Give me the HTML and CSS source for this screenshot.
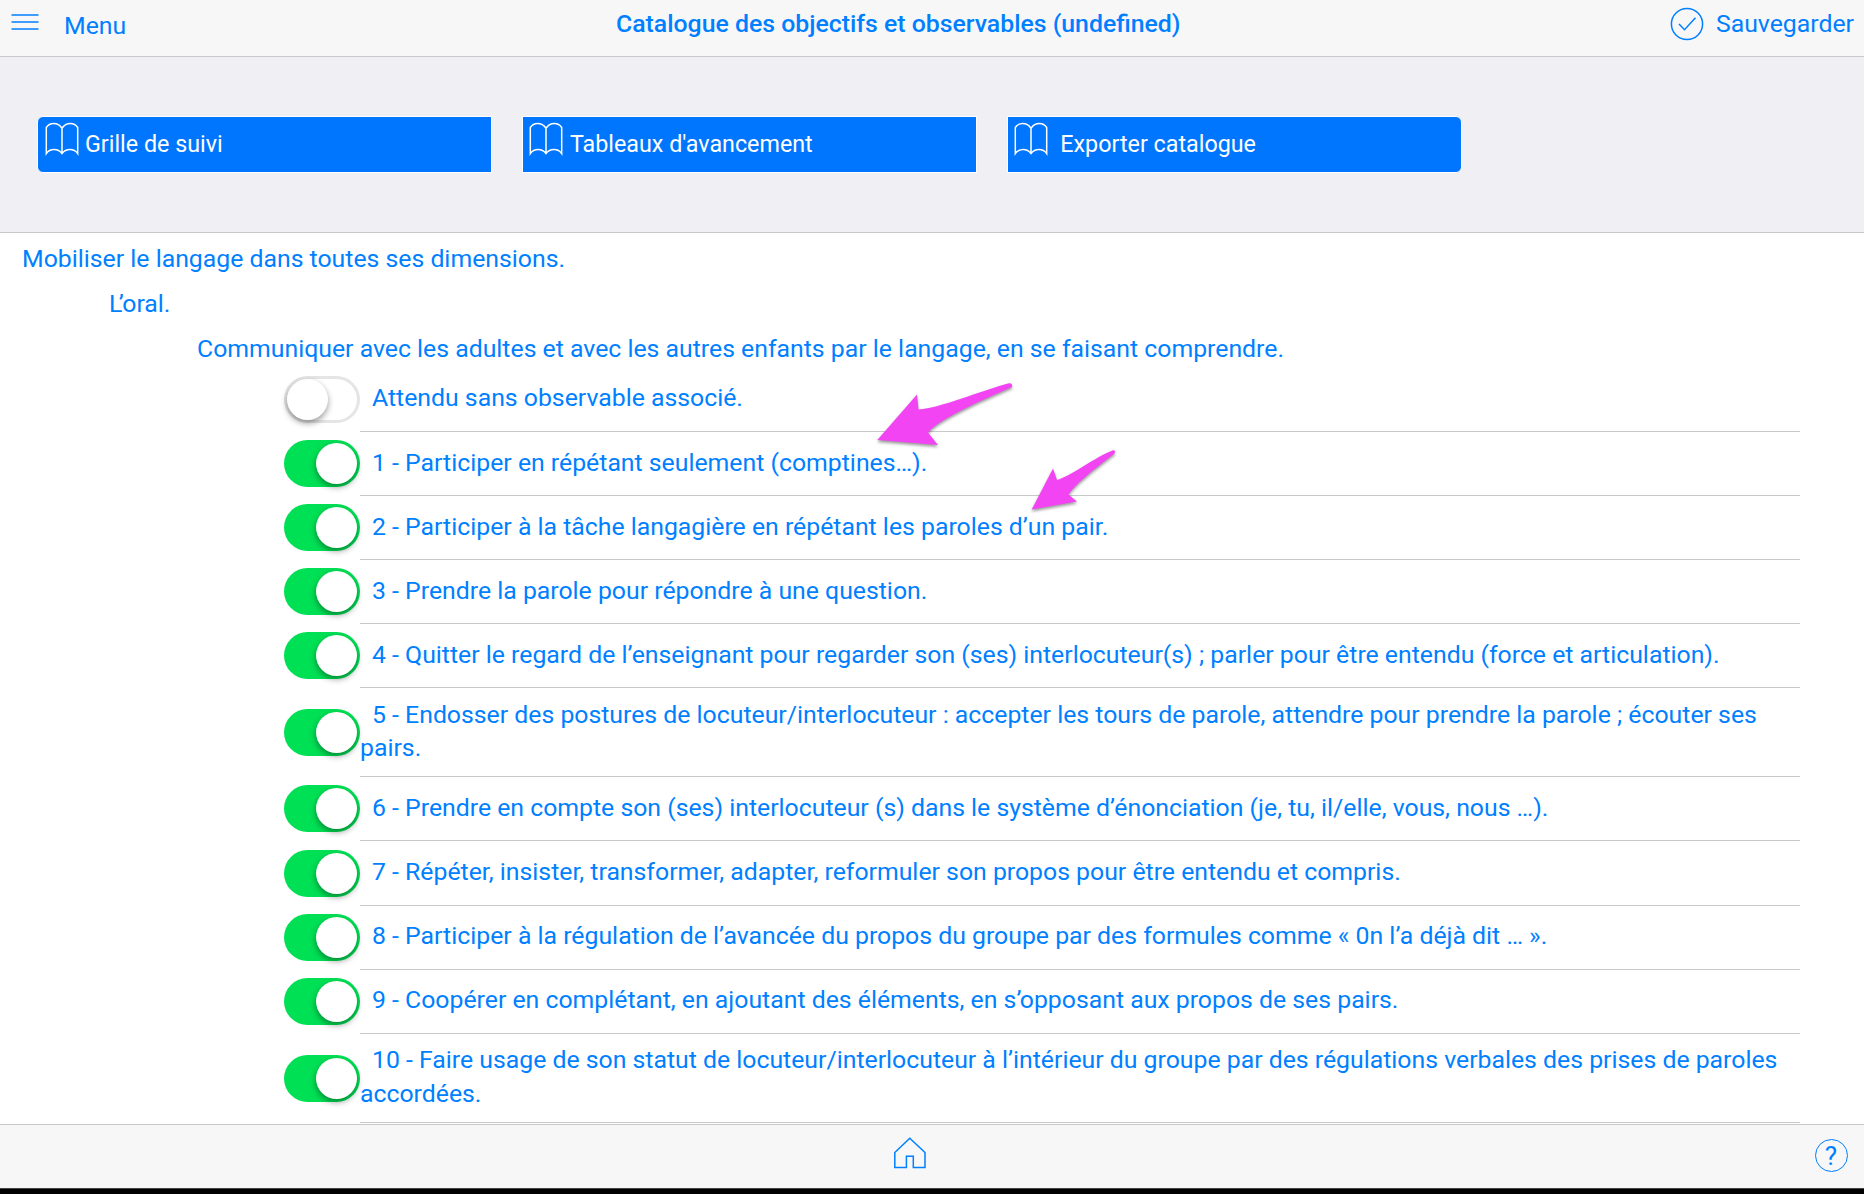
FILE: index.html
```html
<!DOCTYPE html>
<html lang="fr">
<head>
<meta charset="utf-8">
<title>Catalogue des objectifs et observables</title>
<link rel="stylesheet" href="styles.css">
</head>
<body>
<svg class="defs" width="0" height="0" aria-hidden="true">
  <symbol id="book" viewBox="0 0 34 34">
    <path d="M17 6.2C14.5 2.6 11 1.6 8.600 1.600C5.500 1.600 3 3 1.300 5.500V31.500C5 26.200 13 26.200 17 31.500C21 26.200 29 26.200 32.700 31.500V5.500C31 3 28.500 1.600 25.400 1.600C23 1.600 19.500 2.600 17 6.200V31"/>
  </symbol>
</svg>
<div class="app">
  <header class="navbar">
    <a class="nav-left">
      <svg class="menu-icon" viewBox="0 0 28 18"><path d="M.5 2H27.500M.5 9H27.500M.5 16H27.500"/></svg>
      <span class="menu-label">Menu</span>
    </a>
    <h1 class="title">Catalogue des objectifs et observables (undefined)</h1>
    <a class="nav-right">
      <svg class="check-icon" viewBox="0 0 34 34"><circle cx="17" cy="17" r="15.600"/><path d="M9 17L14.500 22.700L25.500 10.800"/></svg>
      <span>Sauvegarder</span>
    </a>
  </header>

  <section class="toolbar">
    <a class="button first"><svg class="book"><use href="#book"/></svg><span>Grille de suivi</span></a>
    <a class="button"><svg class="book"><use href="#book"/></svg><span>Tableaux d'avancement</span></a>
    <a class="button last"><svg class="book"><use href="#book"/></svg><span>Exporter catalogue</span></a>
  </section>

  <main class="content">
    <p class="heading level-1">Mobiliser le langage dans toutes ses dimensions.</p>
    <p class="heading level-2"><span class="kern">L</span>’oral.</p>
    <p class="heading level-3">Communiquer avec les adultes et avec les autres enfants par le langage, en se faisant comprendre.</p>
    <ul class="list">
      <li class="row"><span class="toggle off"></span><div class="label"><p>Attendu sans observable associé.</p></div></li>
      <li class="row"><span class="toggle"></span><div class="label"><p>1 - Participer en répétant seulement (comptines…).</p></div></li>
      <li class="row"><span class="toggle"></span><div class="label"><p>2 - Participer à la tâche langagière en répétant les paroles d’un pair.</p></div></li>
      <li class="row"><span class="toggle"></span><div class="label"><p>3 - Prendre la parole pour répondre à une question.</p></div></li>
      <li class="row"><span class="toggle"></span><div class="label"><p>4 - Quitter le regard de l’enseignant pour regarder son (ses) interlocuteur(s) ; parler pour être entendu (force et articulation).</p></div></li>
      <li class="row tall"><span class="toggle"></span><div class="label"><p>5 - Endosser des postures de locuteur/interlocuteur : accepter les tours de parole, attendre pour prendre la parole ; écouter ses<br>pairs.</p></div></li>
      <li class="row"><span class="toggle"></span><div class="label"><p>6 - Prendre en compte son (ses) interlocuteur (s) dans le système d’énonciation (je, tu, il/elle, vous, nous …).</p></div></li>
      <li class="row"><span class="toggle"></span><div class="label"><p>7 - Répéter, insister, transformer, adapter, reformuler son propos pour être entendu et compris.</p></div></li>
      <li class="row"><span class="toggle"></span><div class="label"><p>8 - Participer à la régulation de l’avancée du propos du groupe par des formules comme « 0n l’a déjà dit … ».</p></div></li>
      <li class="row"><span class="toggle"></span><div class="label"><p>9 - Coopérer en complétant, en ajoutant des éléments, en s’opposant aux propos de ses pairs.</p></div></li>
      <li class="row tall"><span class="toggle"></span><div class="label"><p>10 - Faire usage de son statut de locuteur/interlocuteur à l’intérieur du groupe par des régulations verbales des prises de paroles<br>accordées.</p></div></li>
    </ul>
  </main>

  <footer class="tabbar">
    <svg class="home-icon" viewBox="0 0 34 34"><path d="M16.800 2.200L32 16.500V31.500H20.300V20.200H13.400V31.500H1.800V16.500Z"/></svg>
    <span class="help">?</span>
  </footer>
  <div class="base"></div>
</div>
<svg class="arrows" viewBox="0 0 260 150">
  <path d="M7.300 61L47 15.500L48.500 30.500C70 29 110 12 139 4.200Q143 4 142 8C115 20 72 38 58 53.500L68 66Z"/>
  <path d="M161.700 130.500L183 89.500L187 101C203 96 225 78 243 71.200Q246 71 244.500 74.500C230 86 208 102 198.500 115.500L207 122.500Z"/>
</svg>
</body>
</html>
```
FILE: styles.css
```css
* { box-sizing: border-box; }
body {
  margin: 0;
  background: #fff;
  color: #007fff;
  font: 24.800px/33.600px Roboto, sans-serif;
}
svg { fill: none; stroke: #007fff; stroke-width: 1.5; flex: none; }
p, h1, ul { margin: 0; padding: 0; }
.defs { position: absolute; }
.app {
  display: flex;
  flex-direction: column;
  width: 1864px;
  height: 1194px;
  overflow: hidden;
}
.navbar {
  display: grid;
  grid-template-columns: 616px 1fr auto;
  align-items: start;
  height: 57px;
  flex: none;
  background: #f7f7f7;
  border-bottom: 1px solid #c8c8cb;
}
.nav-left, .nav-right { display: flex; }
.nav-left { padding: 8px 0 0 11px; }
.menu-icon { width: 28px; height: 18px; margin-top: 5px; }
.menu-label { margin: 1px 0 0 25px; }
.title { font-size: 24.820px; line-height: 33.600px; font-weight: 500; padding-top: 6.900px; white-space: nowrap; }
.nav-right { padding: 6.900px 10px 0 0; }
.check-icon { width: 34px; height: 34px; margin: .5px 12px 0 0; }

.toolbar {
  display: flex;
  gap: 29.900px;
  height: 176px;
  flex: none;
  padding: 59px 0 0 37px;
  background: #efeff4;
  border-bottom: 1px solid #c8c8cb;
}
.button {
  display: flex;
  width: 455px;
  height: 57px;
  padding: 5px 6.500px;
  gap: 6.500px;
  background: #0076ff;
  border: 1px solid #fff;
  color: #fff;
  font-size: 23.300px;
}
.button span { padding-top: 5.500px; }
.first { border-radius: 6px 0 0 6px; }
.last { border-radius: 0 6px 6px 0; gap: 12px; }
.book { width: 34px; height: 34px; stroke: #fff; }

.content { flex: 1; min-height: 0; overflow: hidden; padding-top: 3px; }
.heading { height: 45.300px; padding-top: 5.500px; white-space: nowrap; }
.level-1 { padding-left: 22px; }
.level-2 { padding-left: 109px; }
.level-3 { padding-left: 197px; padding-top: 5px; height: 41px; }
.kern { letter-spacing: -3.500px; }
.list { list-style: none; padding-left: 284px; }
.row { display: flex; height: 64.150px; }
.tall { height: 89px; }
.toggle {
  display: flex;
  flex: none;
  justify-content: flex-end;
  align-self: center;
  width: 76px;
  height: 47px;
  margin-bottom: 1px;
  padding: 3px;
  border-radius: 24px;
  background: #00e054;
}
.tall .toggle { margin-bottom: 0; }
.toggle::after {
  content: "";
  width: 41px;
  height: 41px;
  border-radius: 50%;
  background: #fff;
  box-shadow: 0 3px 6px rgba(0, 0, 0, .4);
}
.off { justify-content: flex-start; background: #fff; box-shadow: inset 0 0 0 3px #e5e5e5; }
.label {
  display: flex;
  align-items: center;
  width: 1440px;
  padding-bottom: 2px;
  border-bottom: 1px solid #c8c8cb;
  text-indent: 12px;
  white-space: nowrap;
}

.tabbar {
  display: grid;
  grid-template-columns: 892.500px 34px 1fr;
  align-items: start;
  flex: none;
  height: 64px;
  padding: 11px 16.500px 0 0;
  background: #f7f7f7;
  border-top: 1px solid #c8c8cb;
}
.home-icon { grid-column: 2; width: 34px; height: 34px; }
.help {
  justify-self: end;
  width: 33px;
  height: 33px;
  margin-top: 3px;
  border: 1.500px solid #007fff;
  border-radius: 50%;
  font-size: 26px;
  line-height: 32px;
  text-align: center;
}
.base { flex: none; height: 6px; background: #000; border-top: 1px solid #444; }
.arrows {
  position: absolute;
  left: 870px;
  top: 379px;
  width: 260px;
  height: 150px;
  fill: #f344f3;
  stroke: none;
  filter: drop-shadow(0 2px 1.500px rgba(0, 0, 0, .4));
}
```
